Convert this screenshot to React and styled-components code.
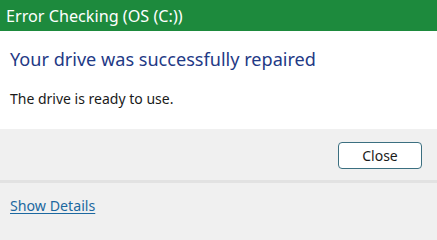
import React from "react";
import styled, { createGlobalStyle } from "styled-components";

const Global = createGlobalStyle`
  html, body { margin: 0; padding: 0; background: #f0f0f0; }
  body { font-family: "Noto Sans", "Open Sans", sans-serif; }
  #root { width: 437px; height: 221px; overflow: hidden; }
`;

const Dialog = styled.div`
  display: flex;
  flex-direction: column;
  width: 437px;
  height: 221px;
  background: #f0f0f0;
`;

const TitleBar = styled.div`
  height: 31px;
  flex: none;
  display: flex;
  align-items: center;
  padding-left: 6px;
  background: #1d8a3d;
  color: #ffffff;
  font-size: 16.2px;
`;

const Content = styled.div`
  height: 98px;
  flex: none;
  box-sizing: border-box;
  padding: 15px 10px 0;
  background: #ffffff;
`;

const Heading = styled.h1`
  margin: 0;
  font-weight: 400;
  font-size: 18.1px;
  line-height: 27px;
  color: #1f3a86;
`;

const Body = styled.p`
  margin: 16px 0 0;
  font-size: 14px;
  line-height: 19px;
  color: #1a1a1a;
`;

const ButtonBar = styled.div`
  height: 51px;
  flex: none;
  display: flex;
  justify-content: flex-end;
  align-items: center;
  padding-right: 15px;
  border-bottom: 3px solid #e2e2e2;
`;

const Button = styled.button`
  width: 84px;
  height: 27px;
  margin-top: 1px;
  padding: 0;
  border: 1px solid #3b6f80;
  border-radius: 4px;
  background: #ffffff;
  font-family: inherit;
  font-size: 14px;
  color: #1a1a1a;
`;

const Footer = styled.div`
  height: 38px;
  flex: none;
  box-sizing: border-box;
  display: flex;
  align-items: flex-start;
  padding: 13px 10px 0;
`;

const Link = styled.a`
  font-size: 14.2px;
  line-height: 19px;
  color: #1c68a0;
  text-decoration: underline;
  text-underline-offset: 2px;
  cursor: pointer;
`;

export default function App() {
  return (
    <>
      <Global />
      <Dialog>
        <TitleBar>Error Checking (OS (C:))</TitleBar>
        <Content>
          <Heading>Your drive was successfully repaired</Heading>
          <Body>The drive is ready to use.</Body>
        </Content>
        <ButtonBar>
          <Button>Close</Button>
        </ButtonBar>
        <Footer>
          <Link>Show Details</Link>
        </Footer>
      </Dialog>
    </>
  );
}
